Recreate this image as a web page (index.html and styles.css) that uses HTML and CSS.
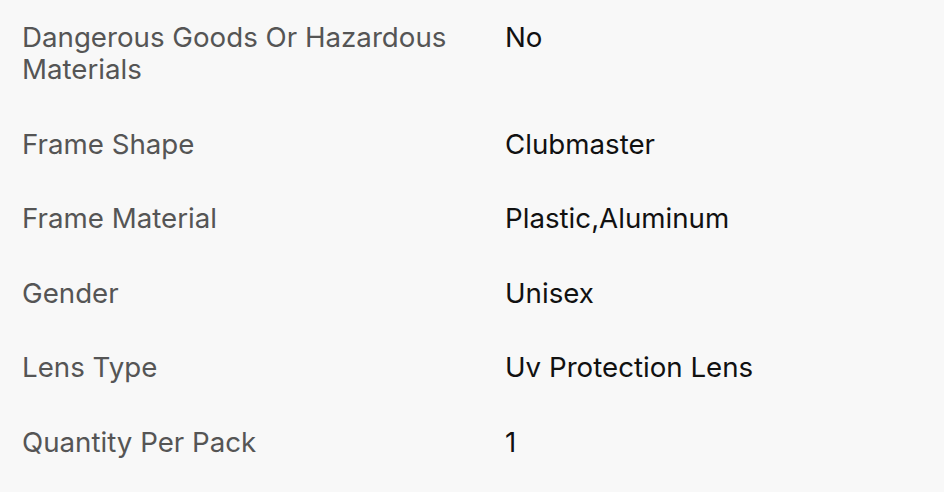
FILE: index.html
```html
<!DOCTYPE html>
<html>
<head>
<meta charset="utf-8">
<link rel="stylesheet" href="styles.css">
</head>
<body>
<div class="specs">
  <div class="label">Dangerous Goods Or Hazardous Materials</div>
  <div class="value">No</div>
  <div class="label">Frame Shape</div>
  <div class="value">Clubmaster</div>
  <div class="label">Frame Material</div>
  <div class="value">Plastic,Aluminum</div>
  <div class="label">Gender</div>
  <div class="value">Unisex</div>
  <div class="label">Lens Type</div>
  <div class="value">Uv Protection Lens</div>
  <div class="label">Quantity Per Pack</div>
  <div class="value">1</div>
</div>
</body>
</html>
```
FILE: styles.css
```css
html, body {
  margin: 0;
  background: #f8f8f8;
}
.specs {
  display: grid;
  grid-template-columns: 483px 1fr;
  row-gap: 42.5px;
  padding: 21px 22px;
  font-family: Inter, "Noto Sans", sans-serif;
  font-size: 27.7px;
  line-height: 32px;
}
.label {
  color: #555555;
  padding-right: 20px;
}
.value {
  color: #111111;
}
```
